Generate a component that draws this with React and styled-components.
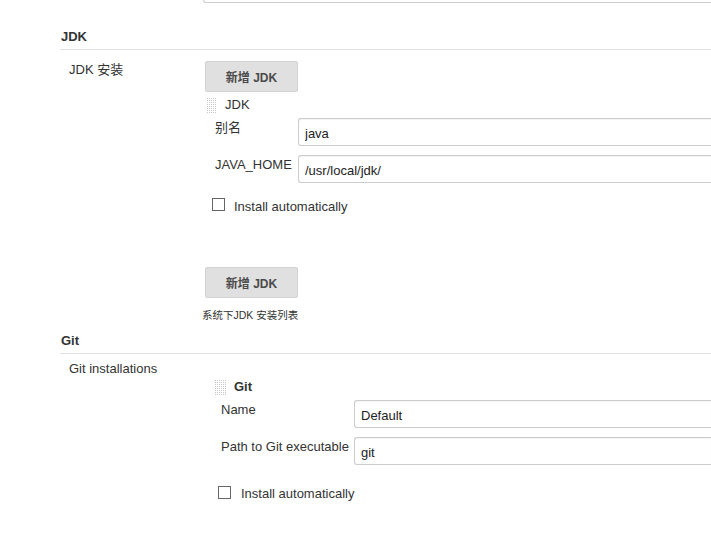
import React from 'react';
import styled, { createGlobalStyle } from 'styled-components';

const GlobalStyle = createGlobalStyle`
    html, body {
        margin: 0;
        padding: 0;
        background: #fff;
        overflow: hidden;
    }
    body {
        font-family: "Liberation Sans", Arial, "Noto Sans CJK SC", sans-serif;
        font-size: 13px;
        color: #333;
    }
`;

const Page = styled.div`
    width: 711px;
    height: 552px;
    padding-left: 60px;
    box-sizing: border-box;
    overflow: hidden;
`;

const TopStub = styled.div`
    margin-left: 143px;
    height: 2px;
    border: 1px solid #ccc;
    border-top: none;
    border-right: none;
    border-radius: 0 0 0 3px;
`;

const SectionHeader = styled.div`
    margin-top: ${(p) => p.$top}px;
    padding: 0 0 4px 1px;
    font-weight: bold;
    line-height: 16px;
    color: #333;
    border-bottom: 1px solid #e0e0e0;
`;

const Row = styled.div`
    display: grid;
    grid-template-columns: 145px 1fr;
`;

const RowLabel = styled.div`
    padding: ${(p) => p.$top}px 0 0 9px;
    line-height: 16px;
`;

const Settings = styled.div`
    padding-top: ${(p) => p.$top || 0}px;
`;

const AddButton = styled.button`
    display: block;
    width: 93px;
    height: 31px;
    margin-top: ${(p) => p.$top || 0}px;
    padding: 0;
    border: 1px solid #d2d2d2;
    border-radius: 2px;
    background: #e0e0e0;
    color: #4a4a4a;
    font-family: "Liberation Sans", Arial, "Noto Sans CJK SC", sans-serif;
    font-size: 12px;
    font-weight: bold;
`;

const Help = styled.div`
    margin: 10px 0 0 -3px;
    font-size: 10.5px;
    line-height: 14px;
    color: #333;
`;

const Block = styled.div`
    margin-top: ${(p) => p.$top}px;
`;

const BlockHead = styled.div`
    display: flex;
    align-items: center;
    gap: 8px;
    height: 16px;
    padding-left: ${(p) => p.$indent}px;
    font-weight: ${(p) => (p.$bold ? 'bold' : 'normal')};
    line-height: 16px;
`;

const Handle = styled.span`
    width: ${(p) => p.$w}px;
    height: 16px;
    background-color: #c8c8c8;
    background-image:
        linear-gradient(90deg, #fff 1px, transparent 1px),
        linear-gradient(#fff 1px, transparent 1px);
    background-size: 2px 2px;
`;

const FieldRow = styled.div`
    display: grid;
    grid-template-columns: ${(p) => p.$labelWidth}px 1fr;
    margin-top: ${(p) => p.$top}px;
    padding-left: ${(p) => p.$indent}px;
`;

const FieldLabel = styled.div`
    line-height: 16px;
    padding-top: 2px;
    white-space: nowrap;
`;

const Input = styled.input`
    width: 100%;
    height: 28px;
    box-sizing: border-box;
    padding: 2px 6px 0;
    border: 1px solid #ccc;
    border-right: none;
    border-radius: 3px 0 0 3px;
    box-shadow: inset 0 1px 1px rgba(0, 0, 0, 0.05);
    font-family: "Liberation Sans", Arial, sans-serif;
    font-size: 13px;
    color: #222;
    outline: none;
`;

const CheckRow = styled.label`
    display: flex;
    align-items: flex-start;
    gap: ${(p) => p.$gap}px;
    margin-top: ${(p) => p.$top}px;
    padding-left: ${(p) => p.$indent}px;
    line-height: 16px;
`;

const Box = styled.span`
    width: 11px;
    height: 11px;
    margin-top: 1px;
    border: 1px solid #666;
    background: #fff;
    flex: none;
`;

const CheckText = styled.span`
    padding-top: ${(p) => p.$shift}px;
`;

function Field({ label, value, labelWidth, indent, top }) {
    return (
        <FieldRow $labelWidth={labelWidth} $indent={indent} $top={top}>
            <FieldLabel>{label}</FieldLabel>
            <Input defaultValue={value} />
        </FieldRow>
    );
}

export default function App() {
    return (
        <>
            <GlobalStyle />
            <Page>
                <TopStub />
                <SectionHeader $top={26}>JDK</SectionHeader>
                <Row>
                    <RowLabel $top={12}>JDK 安装</RowLabel>
                    <Settings $top={11}>
                        <AddButton>新增 JDK</AddButton>
                        <Block $top={5}>
                            <BlockHead $indent={1}>
                                <Handle $w={11} />
                                JDK
                            </BlockHead>
                            <Field label="别名" value="java" labelWidth={83} indent={10} top={5} />
                            <Field label="JAVA_HOME" value="/usr/local/jdk/" labelWidth={83} indent={10} top={9} />
                            <CheckRow $indent={7} $gap={9} $top={14}>
                                <Box />
                                <CheckText $shift={2}>Install automatically</CheckText>
                            </CheckRow>
                        </Block>
                        <AddButton $top={52}>新增 JDK</AddButton>
                        <Help>系统下JDK 安装列表</Help>
                    </Settings>
                </Row>
                <SectionHeader $top={11}>Git</SectionHeader>
                <Row>
                    <RowLabel $top={7}>Git installations</RowLabel>
                    <Settings>
                        <Block $top={25}>
                            <BlockHead $indent={9} $bold>
                                <Handle $w={12} />
                                Git
                            </BlockHead>
                            <Field label="Name" value="Default" labelWidth={133} indent={16} top={5} />
                            <Field label="Path to Git executable" value="git" labelWidth={133} indent={16} top={9} />
                            <CheckRow $indent={13} $gap={10} $top={20}>
                                <Box />
                                <CheckText $shift={1}>Install automatically</CheckText>
                            </CheckRow>
                        </Block>
                    </Settings>
                </Row>
            </Page>
        </>
    );
}
